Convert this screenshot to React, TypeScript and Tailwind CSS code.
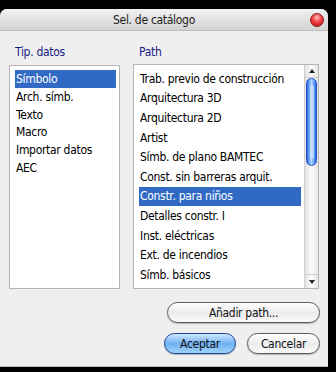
import React from "react";

const TIPOS = ["Símbolo", "Arch. símb.", "Texto", "Macro", "Importar datos", "AEC"];

const PATHS = [
  "Trab. previo de construcción",
  "Arquitectura 3D",
  "Arquitectura 2D",
  "Artist",
  "Símb. de plano BAMTEC",
  "Const. sin barreras arquit.",
  "Constr. para niños",
  "Detalles constr. I",
  "Inst. eléctricas",
  "Ext. de incendios",
  "Símb. básicos",
];

function Scrollbar() {
  return (
    <div className="w-[14px] h-full flex flex-col bg-gradient-to-r from-[#e2e2e2] via-[#fbfbfb] to-[#e6e6e6] border-l border-[#d0d0d0]">
      {/* up arrow */}
      <div className="h-[13px] flex items-center justify-center border-b border-[#cfcfcf]">
        <div className="w-0 h-0 border-l-[3px] border-r-[3px] border-b-[4px] border-l-transparent border-r-transparent border-b-[#222]" />
      </div>
      {/* thumb */}
      <div className="h-[88px] mx-[1px] rounded-full border border-[#1f4fc4] bg-gradient-to-r from-[#2a6ae6] via-[#b4d8fd] to-[#2a6ae6] flex justify-center">
        <div className="w-[4px] my-[6px] rounded-full bg-[#cfe6ff]/70" />
      </div>
      <div className="flex-1" />
      {/* down arrow */}
      <div className="h-[14px] flex items-center justify-center border-t border-[#cfcfcf]">
        <div className="w-0 h-0 border-l-[3px] border-r-[3px] border-t-[4px] border-l-transparent border-r-transparent border-t-[#222]" />
      </div>
    </div>
  );
}

function AquaButton({ label, blue, w }: { label: string; blue?: boolean; w: string }) {
  return (
    <div
      className={
        "h-[21px] rounded-full border flex items-center justify-center text-[12px] text-[#111] shadow-[0_1px_1px_rgba(0,0,0,0.25)] " +
        w +
        (blue
          ? " border-[#1c3f94] bg-gradient-to-b from-[#d2e8fc] via-[#6fb0f3] to-[#9fd4fb]"
          : " border-[#5a5a5a] bg-gradient-to-b from-[#ffffff] via-[#ececec] to-[#f8f8f8]")
      }
    >
      {label}
    </div>
  );
}

export default function App() {
  return (
    <div
      className="w-[336px] h-[372px] bg-black pt-[9px] overflow-hidden tracking-[-0.3px]"
      style={{ fontFamily: "'DejaVu Sans Condensed', 'Liberation Sans', sans-serif" }}
    >
      <div className="w-[328px] h-[358px] rounded-t-[7px] bg-[#efefef] flex flex-col border-b border-[#b8b8b8]">
        {/* Title bar */}
        <div className="h-[22px] shrink-0 rounded-t-[7px] bg-gradient-to-b from-[#f2f2f2] via-[#e2e2e2] to-[#d2d2d2] border-b border-[#bdbdbd] flex items-center relative">
          <span className="flex-1 text-center pr-[20px] text-[12px] text-[#1e1e1e]">Sel. de catálogo</span>
          <div className="absolute right-[4px] top-[4px] w-[14px] h-[14px] rounded-full border border-[#8a1c1c] bg-[radial-gradient(circle_at_50%_30%,#ffc0c0_0%,#f04040_45%,#b80f0f_100%)]" />
        </div>

        {/* Body */}
        <div className="flex gap-[13px] pl-[9px] pr-[9px] pt-[14px]">
          {/* Left column */}
          <div className="w-[111px] flex flex-col">
            <div className="h-[20px] pl-[6px] text-[12px] text-[#1a1a8a] leading-[14px]">Tip. datos</div>
            <div className="h-[224px] bg-white border border-[#b4b4b4] pt-[4px] pl-[5px] pr-[3px]">
              {TIPOS.map((t, i) => (
                <div
                  key={t}
                  className={
                    "h-[17.8px] flex items-center pl-[1px] text-[12px] " +
                    (i === 0 ? "bg-[#316ac5] text-white" : "text-black")
                  }
                >
                  {t}
                </div>
              ))}
            </div>
          </div>

          {/* Right column */}
          <div className="w-[186px] flex flex-col">
            <div className="h-[19px] pl-[6px] text-[12px] text-[#1a1a8a] leading-[14px]">Path</div>
            <div className="h-[225px] bg-white border border-[#b4b4b4] flex">
              <div className="flex-1 pt-[4px] pl-[5px] pr-[3px]">
                {PATHS.map((p, i) => (
                  <div
                    key={p}
                    className={
                      "h-[19.6px] flex items-center pl-[1px] text-[12px] whitespace-nowrap " +
                      (i === 6 ? "bg-[#316ac5] text-white" : "text-black")
                    }
                  >
                    {p}
                  </div>
                ))}
              </div>
              <Scrollbar />
            </div>
          </div>
        </div>

        {/* Buttons */}
        <div className="flex flex-col items-end gap-[10px] pr-[8px] pt-[13px]">
          <AquaButton label="Añadir path..." w="w-[153px]" />
          <div className="flex gap-[11px]">
            <AquaButton label="Aceptar" blue w="w-[72px]" />
            <AquaButton label="Cancelar" w="w-[73px]" />
          </div>
        </div>
      </div>
    </div>
  );
}
